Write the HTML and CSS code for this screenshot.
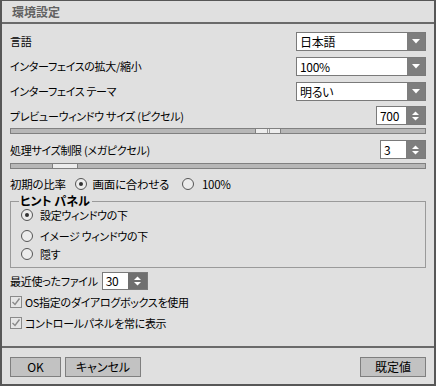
FILE: index.html
```html
<!DOCTYPE html>
<html lang="ja">
<head>
<meta charset="utf-8">
<title>環境設定</title>
<link rel="stylesheet" href="styles.css">
</head>
<body>
<div class="win">
  <div class="title">環境設定</div>
  <div class="content">
    <div class="row r1">
      <span>言語</span>
      <div class="select"><span class="val">日本語</span><span class="sbtn"><svg width="8" height="5" viewBox="0 0 8 5"><polygon points="0,0 8,0 4,4.5" fill="#fff"/></svg></span></div>
    </div>
    <div class="row r2">
      <span>インターフェイスの拡大/縮小</span>
      <div class="select"><span class="val">100%</span><span class="sbtn"><svg width="8" height="5" viewBox="0 0 8 5"><polygon points="0,0 8,0 4,4.5" fill="#fff"/></svg></span></div>
    </div>
    <div class="row r3">
      <span>インターフェイス&nbsp;テーマ</span>
      <div class="select"><span class="val">明るい</span><span class="sbtn"><svg width="8" height="5" viewBox="0 0 8 5"><polygon points="0,0 8,0 4,4.5" fill="#fff"/></svg></span></div>
    </div>
    <div class="row r4">
      <span>プレビューウィンドウ サイズ (ピクセル)</span>
      <div class="spin w50"><span class="sval">700</span><span class="spbtn"><svg width="7" height="10" viewBox="0 0 7 10"><polygon points="0,4 7,4 3.5,0.5" fill="#fff"/><polygon points="0,6 7,6 3.5,9.5" fill="#fff"/></svg></span></div>
    </div>
    <div class="slider s1"><div class="thumb" style="left:244px"><i></i><i></i></div></div>
    <div class="row r5">
      <span>処理サイズ制限 (メガピクセル)</span>
      <div class="spin w46"><span class="sval">3</span><span class="spbtn"><svg width="7" height="10" viewBox="0 0 7 10"><polygon points="0,4 7,4 3.5,0.5" fill="#fff"/><polygon points="0,6 7,6 3.5,9.5" fill="#fff"/></svg></span></div>
    </div>
    <div class="slider s2"><div class="thumb" style="left:41px"></div></div>
    <div class="ratio">
      <span>初期の比率</span>
      <span class="radio on r-a"></span><span>画面に合わせる</span>
      <span class="radio r-b"></span><span>100%</span>
    </div>
    <fieldset class="group">
      <legend>ヒント パネル</legend>
      <div class="opt o1"><span class="radio on"></span><span>設定ウィンドウの下</span></div>
      <div class="opt o2"><span class="radio"></span><span>イメージ ウィンドウの下</span></div>
      <div class="opt o3"><span class="radio"></span><span>隠す</span></div>
    </fieldset>
    <div class="recent">
      <span>最近使ったファイル</span>
      <div class="spin w46 small"><span class="sval">30</span><span class="spbtn dark"><svg width="7" height="10" viewBox="0 0 7 10"><polygon points="0,4 7,4 3.5,0.5" fill="#fff"/><polygon points="0,6 7,6 3.5,9.5" fill="#fff"/></svg></span></div>
    </div>
    <div class="check c1"><span class="box"><svg width="10" height="10" viewBox="0 0 10 10"><polyline points="1.5,5 4,7.5 8.5,1.5" fill="none" stroke="#8a8a8a" stroke-width="1.4"/></svg></span><span>OS指定のダイアログボックスを使用</span></div>
    <div class="check c2"><span class="box"><svg width="10" height="10" viewBox="0 0 10 10"><polyline points="1.5,5 4,7.5 8.5,1.5" fill="none" stroke="#8a8a8a" stroke-width="1.4"/></svg></span><span>コントロールパネルを常に表示</span></div>
  </div>
  <div class="footer">
    <div class="btn ok">OK</div>
    <div class="btn cancel">キャンセル</div>
    <div class="spacer"></div>
    <div class="btn def">既定値</div>
  </div>
</div>
</body>
</html>
```

FILE: styles.css
```css
html, body {
  margin: 0;
  padding: 0;
  background: #e0e0e0;
}
.win {
  width: 436px;
  height: 386px;
  box-sizing: border-box;
  border: 2px solid #575757;
  border-top-width: 1px;
  background: #e0e0e0;
  display: flex;
  flex-direction: column;
  font-family: "Noto Sans CJK JP", "Noto Sans", sans-serif;
  font-size: 11px;
  letter-spacing: -0.3px;
  font-feature-settings: "palt";
  color: #000;
}
.title {
  height: 23px;
  box-sizing: border-box;
  border-bottom: 2px solid #6a6a6a;
  padding: 3px 0 0 10px;
  line-height: 16px;
  font-size: 12px;
  letter-spacing: 0;
  font-weight: bold;
  color: #626262;
  flex: none;
}
.content {
  flex: 1;
  padding: 0 8px;
  display: flex;
  flex-direction: column;
}
.row {
  display: flex;
  justify-content: space-between;
  align-items: center;
  height: 20px;
}
.r1 { margin-top: 7px; }
.r2 { margin-top: 5px; }
.r3 { margin-top: 5px; }
.r4 { margin-top: 5px; height: 19px; }
.r5 { margin-top: 6px; height: 19px; }
.select {
  width: 130px;
  height: 19px;
  box-sizing: border-box;
  border: 1px solid #7a7a7a;
  background: #fff;
  display: flex;
  font-size: 12px;
}
.val {
  flex: 1;
  padding-left: 3px;
  line-height: 17px;
}
.sbtn {
  width: 18px;
  background: #7e7e7e;
  display: flex;
  align-items: center;
  justify-content: center;
}
.spin {
  height: 19px;
  box-sizing: border-box;
  border: 1px solid #7a7a7a;
  background: #fff;
  display: flex;
  font-size: 12px;
}
.w50 { width: 50px; }
.w46 { width: 46px; }
.sval {
  flex: 1;
  padding-left: 3px;
  line-height: 17px;
}
.spbtn {
  width: 19px;
  background: #7e7e7e;
  display: flex;
  align-items: center;
  justify-content: center;
}
.spbtn.dark { background: #6f6f6f; }
.slider {
  position: relative;
  height: 6px;
  box-sizing: border-box;
  border: 1px solid #808080;
  background: #b7b7b7;
}
.s1 { margin-top: 3px; }
.s2 { margin-top: 4px; }
.thumb {
  position: absolute;
  top: -1px;
  width: 26px;
  height: 6px;
  box-sizing: border-box;
  border: 1px solid #808080;
  background: #ededed;
  display: flex;
  justify-content: center;
  gap: 1px;
}
.thumb i {
  width: 1px;
  background: #9a9a9a;
}
.ratio {
  margin-top: 7px;
  height: 16px;
  display: flex;
  align-items: center;
  font-size: 11.5px;
}
.r-a { margin: 0 6px 0 9px; }
.r-b { margin: 0 8px 0 13px; }
.radio {
  width: 12px;
  height: 12px;
  box-sizing: border-box;
  border: 1px solid #555;
  border-radius: 50%;
  background: #ececec;
  display: inline-flex;
  align-items: center;
  justify-content: center;
  flex: none;
}
.radio.on::after {
  content: "";
  width: 4px;
  height: 4px;
  border-radius: 50%;
  background: #333;
}
.group {
  margin: 3px 0 0;
  padding: 0 0 5px 10px;
  border: 1px solid #9a9a9a;
}
.group legend {
  margin-left: -2px;
  padding: 0 2px 0 1px;
  font-weight: bold;
  font-size: 12px;
  letter-spacing: 0;
  line-height: 12px;
}
.opt {
  display: flex;
  align-items: center;
  height: 16px;
  gap: 7px;
}
.o1 { margin-top: 0; }
.o2 { margin-top: 5px; }
.o3 { margin-top: 2px; }
.recent {
  margin-top: 4px;
  height: 18px;
  display: flex;
  align-items: center;
  gap: 4px;
}
.spin.small { height: 18px; }
.spin.small .sval { line-height: 16px; }
.check {
  display: flex;
  align-items: center;
  height: 16px;
  gap: 3px;
}
.c1 { margin-top: 4px; }
.c2 { margin-top: 5px; }
.box {
  width: 12px;
  height: 12px;
  box-sizing: border-box;
  border: 1px solid #8a8a8a;
  background: #e6e6e6;
  display: flex;
  align-items: center;
  justify-content: center;
}
.footer {
  flex: none;
  height: 38px;
  box-sizing: border-box;
  border-top: 2px solid #6a6a6a;
  padding: 9px 8px 0;
  display: flex;
  gap: 4px;
  font-size: 12px;
  letter-spacing: 0;
}
.btn {
  height: 20px;
  box-sizing: border-box;
  border: 1px solid #7f7f7f;
  background: #c2c2c2;
  text-align: center;
  line-height: 18px;
}
.ok { width: 51px; }
.cancel { width: 76px; }
.def { width: 66px; }
.spacer { flex: 1; }
```
